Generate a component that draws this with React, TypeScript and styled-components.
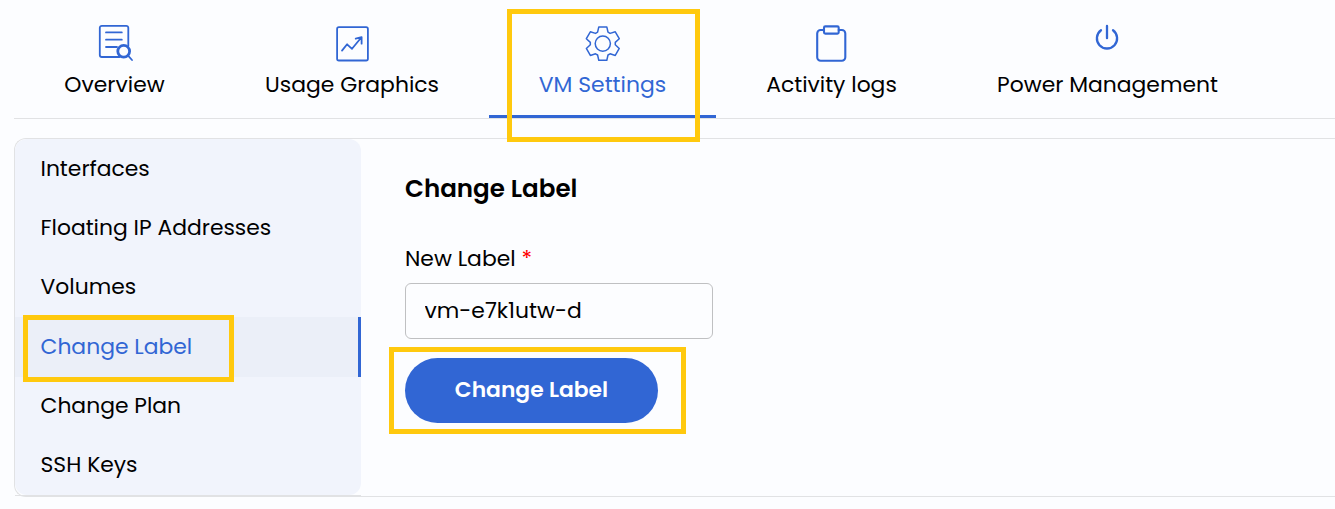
import React from "react";
import styled, { createGlobalStyle } from "styled-components";

const blue = "#3166d4";
const line = "#e1e2e4";

const GlobalStyle = createGlobalStyle`
  *, *::before, *::after { box-sizing: border-box; }
  body {
    margin: 0;
    overflow: hidden;
    background: #fcfdff;
    color: #000;
    font-family: Poppins, "Open Sans", sans-serif;
    font-size: 21.875px;
  }
`;

const Page = styled.main`
  height: 509px;
  padding-left: 14px;
`;

const TabBar = styled.nav`
  display: flex;
  height: 119px;
  border-bottom: 1px solid ${line};
`;

const Tab = styled.a<{ $width: number; $active?: boolean }>`
  position: relative;
  display: flex;
  flex: none;
  flex-direction: column;
  align-items: center;
  width: ${(p) => p.$width}px;
  height: 118px;
  padding-top: 24px;
  border-bottom: 3px solid ${(p) => (p.$active ? blue : "transparent")};
  color: ${(p) => (p.$active ? blue : "inherit")};
`;

const TabIcon = styled.svg<{ $stroke?: number }>`
  flex: none;
  width: 40px;
  height: 40px;
  margin-bottom: 4px;
  overflow: visible;
  fill: none;
  stroke: ${blue};
  stroke-width: ${(p) => p.$stroke ?? 1.8};
  stroke-linecap: round;
  stroke-linejoin: round;
`;

const Text = styled.span`
  line-height: 34px;
  white-space: nowrap;
`;

const Marker = styled.span<{ $top: number; $left: number; $w: number; $h: number }>`
  position: absolute;
  z-index: 2;
  top: ${(p) => p.$top}px;
  left: ${(p) => p.$left}px;
  width: ${(p) => p.$w}px;
  height: ${(p) => p.$h}px;
  border: 5px solid #ffc90e;
  pointer-events: none;
`;

const Panel = styled.section`
  display: flex;
  height: 359px;
  margin-top: 19px;
  border: 1px solid ${line};
  border-right: 0;
  border-radius: 12px 0 0 12px;
`;

const SidebarColumn = styled.aside`
  flex: none;
  width: 346px;
  height: 357px;
  border-bottom: 1px solid ${line};
`;

const Menu = styled.nav`
  display: flex;
  flex-direction: column;
  height: 356px;
  border-radius: 12px;
  background: #f1f4fc;
`;

const SideItem = styled.a<{ $active?: boolean }>`
  position: relative;
  display: flex;
  flex: none;
  align-items: center;
  height: ${(p) => (p.$active ? 60 : 59.33)}px;
  margin-bottom: ${(p) => (p.$active ? -0.67 : 0)}px;
  padding-left: 25.5px;
  border-right: 3px solid ${(p) => (p.$active ? blue : "transparent")};
  background: ${(p) => (p.$active ? "#ebeff8" : "transparent")};
  color: ${(p) => (p.$active ? blue : "inherit")};
`;

const Form = styled.form`
  display: flex;
  flex-direction: column;
  align-items: flex-start;
  padding: 33px 0 0 44px;
`;

const Title = styled.h2`
  margin: 0 0 36px;
  font-size: 24.6px;
  font-weight: 600;
  line-height: 34px;
`;

const Label = styled.label`
  display: flex;
  gap: 6px;
  height: 34px;
  margin-bottom: 7px;
`;

const Required = styled.span`
  color: #f00;
  line-height: 34px;
`;

const Input = styled.input`
  width: 308px;
  height: 56px;
  padding: 0 18.5px 2px;
  border: 1px solid #bfc0c2;
  border-radius: 6px;
  outline: 0;
  background: transparent;
  color: inherit;
  font: inherit;
`;

const Submit = styled.button`
  position: relative;
  width: 253px;
  height: 65px;
  margin-top: 19px;
  padding: 0 0 2px;
  border: 0;
  border-radius: 33px;
  background: ${blue};
  color: #fff;
  font: inherit;
  font-weight: 600;
`;

const OverviewIcon = () => (
  <TabIcon viewBox="0.5 0 40 40" $stroke={1.8}>
    <path d="M33.800 22V3.800a2 2 0 0 0-2-2H7.300a2 2 0 0 0-2 2V31a2 2 0 0 0 2 2H25" />
    <path d="M11.500 8.400H27.300M11.500 15.700H27.300M11.500 23H22.500" />
    <circle cx="29.200" cy="27.300" r="5.900" strokeWidth="2.800" />
    <path d="M34 32.200L37.500 36" />
  </TabIcon>
);

const GraphIcon = () => (
  <TabIcon viewBox="0 0 40 40" $stroke={1.8}>
    <rect x="5.100" y="3.200" width="30.800" height="33.300" rx="1.800" />
    <path d="M10 26.600L15.100 20.300L20 24.800L29.500 13.300M23.700 14.700L29.600 13.100V19.700" />
  </TabIcon>
);

const gearPath =
  [0, 60, 120, 180, 240, 300]
    .flatMap((deg) => {
      const a = (deg * Math.PI) / 180;
      return [[-5.2, -11.4], [-4, -16.7], [4, -16.7], [5.2, -11.4]].map(
        ([x, y]) =>
          `${(20 + x * Math.cos(a) - y * Math.sin(a)).toFixed(2)} ${(19.6 + x * Math.sin(a) + y * Math.cos(a)).toFixed(2)}`
      );
    })
    .reduce((d, p, i) => d + (i ? "L" : "M") + p, "") + "Z";

const GearIcon = () => (
  <TabIcon viewBox="0.2 0 40 40" $stroke={1.5}>
    <path d={gearPath} />
    <circle cx="20" cy="19.600" r="7.600" />
  </TabIcon>
);

const ClipboardIcon = () => (
  <TabIcon viewBox="0.5 0 40 40" $stroke={2.1}>
    <path d="M12.500 6H9.200a3.500 3.500 0 0 0-3.500 3.500V33.300a3.500 3.500 0 0 0 3.500 3.500H30.300a3.500 3.500 0 0 0 3.500-3.500V9.500A3.500 3.500 0 0 0 30.300 6H27.200" />
    <rect x="12.500" y="2.400" width="14.700" height="7.200" rx="1.300" />
  </TabIcon>
);

const PowerIcon = () => (
  <TabIcon viewBox="0.4 0.4 40 40" $stroke={2.3}>
    <path d="M19.400 2.300V14.600M13.400 6.700A10.100 10.100 0 1 0 25.400 6.700" />
  </TabIcon>
);

const tabs = [
  { label: "Overview", width: 201, Icon: OverviewIcon },
  { label: "Usage Graphics", width: 274, Icon: GraphIcon },
  { label: "VM Settings", width: 227, Icon: GearIcon, active: true },
  { label: "Activity logs", width: 231, Icon: ClipboardIcon },
  { label: "Power Management", width: 321, Icon: PowerIcon },
];

const menu = [
  { label: "Interfaces" },
  { label: "Floating IP Addresses" },
  { label: "Volumes" },
  { label: "Change Label", active: true },
  { label: "Change Plan" },
  { label: "SSH Keys" },
];

export default function App() {
  return (
    <Page>
      <GlobalStyle />
      <TabBar>
        {tabs.map(({ label, width, Icon, active }) => (
          <Tab key={label} $width={width} $active={active}>
            <Icon />
            <Text>{label}</Text>
            {active && <Marker $top={9} $left={18} $w={193} $h={133} />}
          </Tab>
        ))}
      </TabBar>
      <Panel>
        <SidebarColumn>
          <Menu>
            {menu.map(({ label, active }) => (
              <SideItem key={label} $active={active}>
                <Text>{label}</Text>
                {active && <Marker $top={-2} $left={8} $w={211} $h={67} />}
              </SideItem>
            ))}
          </Menu>
        </SidebarColumn>
        <Form onSubmit={(e) => e.preventDefault()}>
          <Title>Change Label</Title>
          <Label htmlFor="new-label">
            <Text>New Label</Text>
            <Required>*</Required>
          </Label>
          <Input id="new-label" defaultValue="vm-e7k1utw-d" />
          <Submit type="submit">
            <Text>Change Label</Text>
            <Marker $top={-11} $left={-16} $w={297} $h={87} />
          </Submit>
        </Form>
      </Panel>
    </Page>
  );
}
